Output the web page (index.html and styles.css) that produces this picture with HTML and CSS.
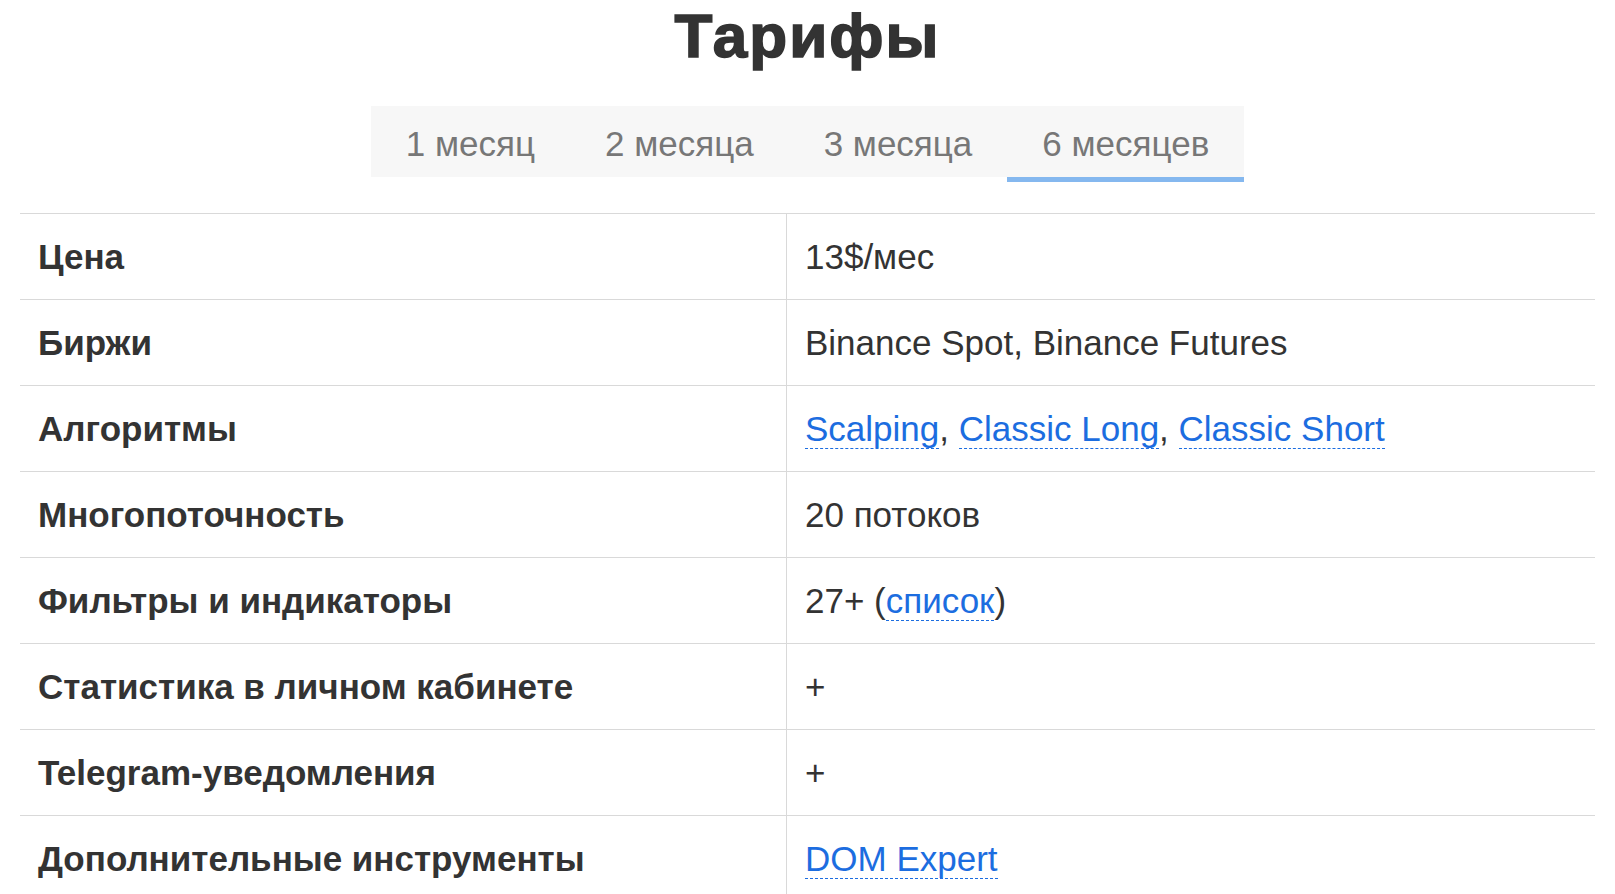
FILE: index.html
```html
<!DOCTYPE html>
<html lang="ru">
<head>
<meta charset="utf-8">
<title>Тарифы</title>
<link rel="stylesheet" href="styles.css">
</head>
<body>
<main class="page">
  <h1 class="title">Тарифы</h1>
  <nav class="tabs">
    <span class="tab">1 месяц</span>
    <span class="tab">2 месяца</span>
    <span class="tab">3 месяца</span>
    <span class="tab tab-active">6 месяцев</span>
  </nav>
  <table class="plans">
    <tbody>
      <tr><th>Цена</th><td>13$/мес</td></tr>
      <tr><th>Биржи</th><td>Binance Spot, Binance Futures</td></tr>
      <tr><th>Алгоритмы</th><td><a class="link" href="#">Scalping</a>, <a class="link" href="#">Classic Long</a>, <a class="link" href="#">Classic Short</a></td></tr>
      <tr><th>Многопоточность</th><td>20 потоков</td></tr>
      <tr><th>Фильтры и индикаторы</th><td>27+ (<a class="link" href="#">список</a>)</td></tr>
      <tr><th>Статистика в личном кабинете</th><td>+</td></tr>
      <tr><th>Telegram-уведомления</th><td>+</td></tr>
      <tr><th>Дополнительные инструменты</th><td><a class="link" href="#">DOM Expert</a></td></tr>
    </tbody>
  </table>
</main>
</body>
</html>
```

FILE: styles.css
```css
html, body {
  margin: 0;
  padding: 0;
  background: #ffffff;
}

body {
  font-family: "Liberation Sans", Arial, sans-serif;
  color: #333333;
}

.page {
  padding: 0 20px 0 20px;
}

.title {
  margin: 0;
  text-align: center;
  font-size: 62px;
  font-weight: 700;
  line-height: 71px;
  color: #333333;
  letter-spacing: 2px;
  -webkit-text-stroke: 1.6px #333333;
}

.tabs {
  display: flex;
  justify-content: center;
  margin-top: 35px;
}

.tab {
  display: block;
  background: #f7f7f7;
  background-clip: padding-box;
  color: #777777;
  font-size: 35px;
  line-height: 39px;
  padding: 18px 35px 14px;
  border-bottom: 5px solid transparent;
}

.tab-active {
  border-bottom-color: #85b8ef;
}

.plans {
  width: 100%;
  margin-top: 31px;
  border-collapse: collapse;
  font-size: 35px;
  line-height: 39px;
}

.plans th,
.plans td {
  text-align: left;
  vertical-align: middle;
  padding: 23px 18px;
  border-top: 1px solid #d9d9d9;
  white-space: nowrap;
}

.plans th {
  width: 730px;
  font-weight: 700;
  color: #333333;
}

.plans td {
  border-left: 1px solid #d9d9d9;
  color: #333333;
}

.link {
  color: #1c6de0;
  text-decoration: none;
  border-bottom: 1px dashed #1c6de0;
}
```
